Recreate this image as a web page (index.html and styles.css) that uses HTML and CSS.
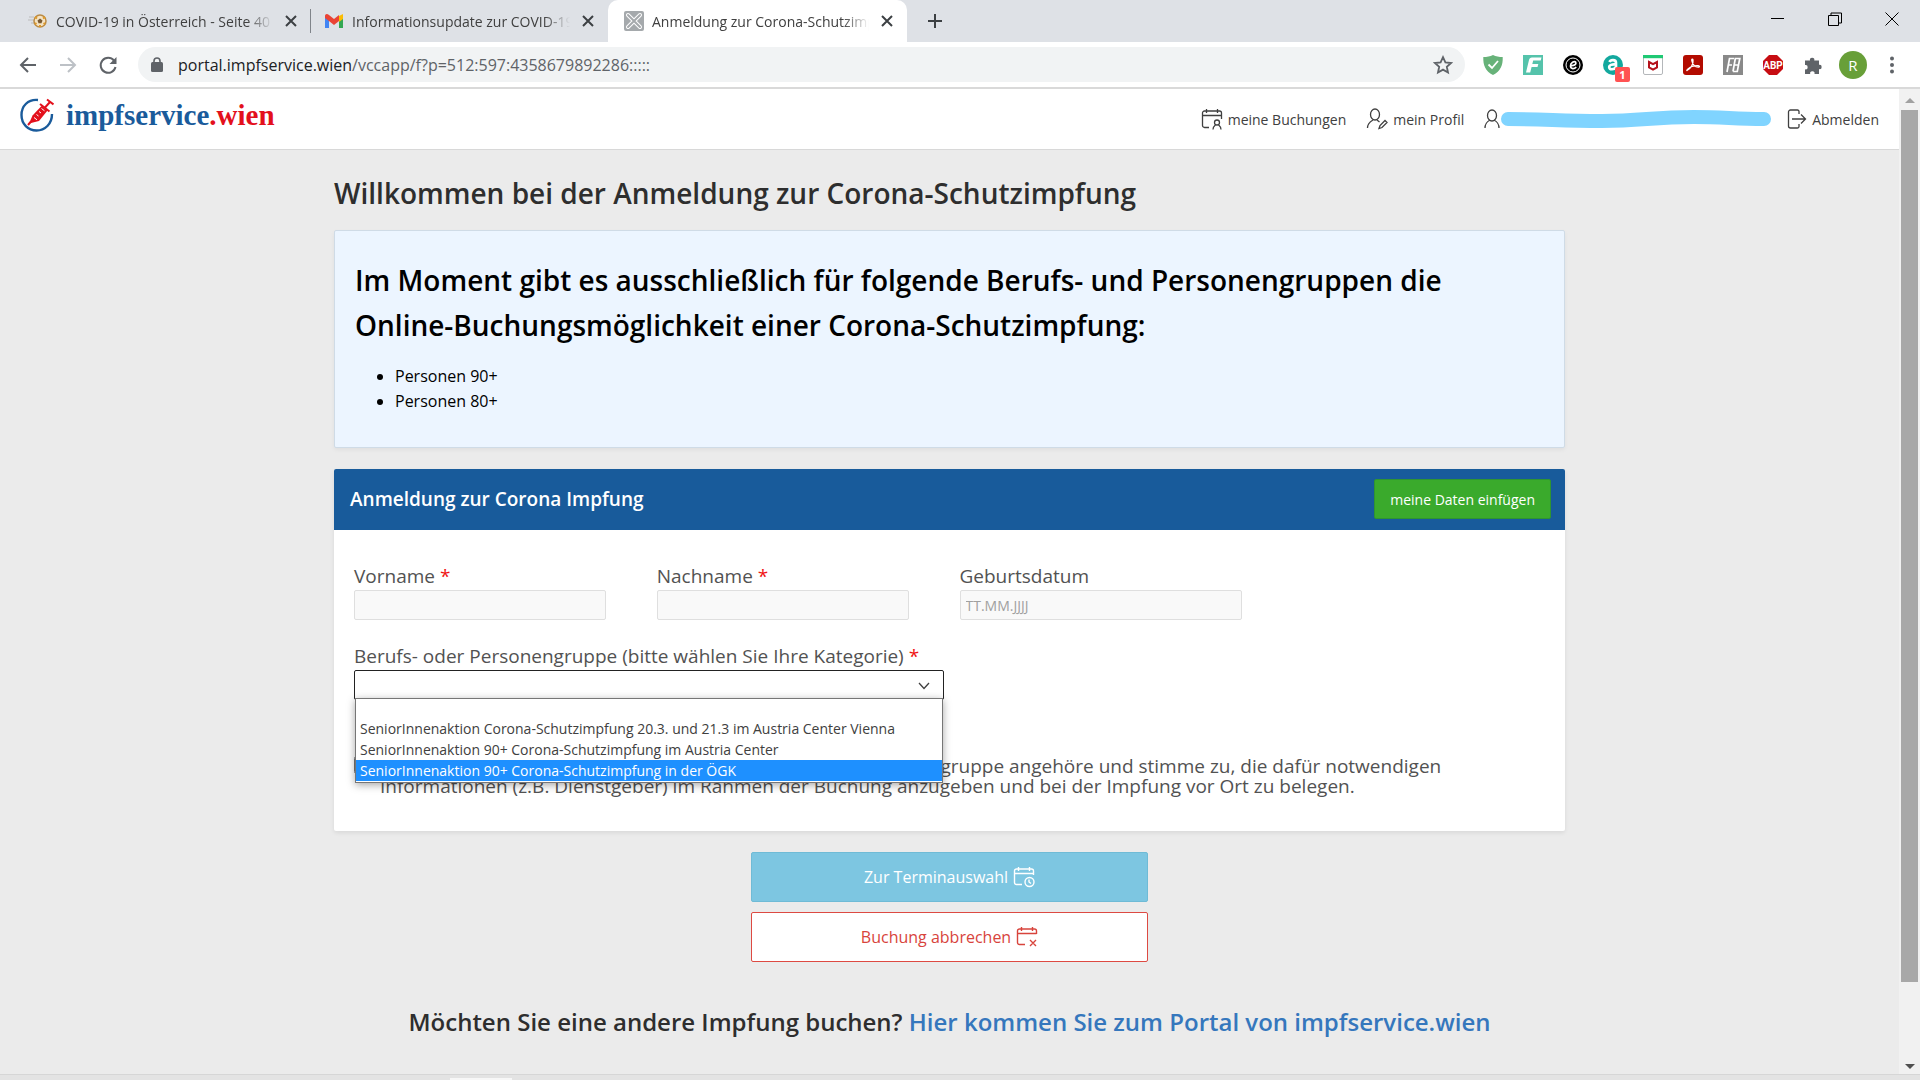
FILE: index.html
```html
<!DOCTYPE html>
<html lang="de">
<head>
    <meta charset="UTF-8">
    <meta name="viewport" content="width=device-width, initial-scale=1.0">
    <title>Anmeldung zur Corona-Schutzimpfung</title>
    <link rel="stylesheet" href="styles.css">
</head>
<body>
    <!-- browser tabs -->
    <div class="tab-strip">
        <div class="tab tab-first">
            <svg class="favicon" viewBox="0 0 20 20"><path d="M0 9h6M1 6h5M3 12h3" stroke="#bbb" stroke-width="1"/><circle cx="12" cy="10" r="6" fill="#f4e3c4" stroke="#b98a45" stroke-width="1.5"/><path d="M12 7.500l2.500 2-1 2.800h-3l-1-2.800z" fill="#7a5a32"/><path d="M7 6l2 1.500M17 6l-2 1.500M12 16v-2M7 13l1.500-1M17 13l-1.500-1" stroke="#e09a28" stroke-width="2"/></svg>
            <span class="tab-title">COVID-19 in Österreich - Seite 40</span>
            <button type="button" class="tab-close" aria-label="Tab schließen"><svg viewBox="0 0 12 12"><path d="M1 1l10 10M11 1L1 11"/></svg></button>
        </div>
        <div class="tab tab-second">
            <svg class="favicon" viewBox="0 0 20 20"><path d="M1 5v12h4V8z" fill="#4285f4"/><path d="M19 5v12h-4V8z" fill="#34a853"/><path d="M15 5l4-2v5l-4 3z" fill="#fbbc04"/><path d="M1 5c0-2 2-3 4-1l5 4 5-4v6l-5 4-5-4-4-3z" fill="#ea4335"/></svg>
            <span class="tab-title">Informationsupdate zur COVID-19</span>
            <button type="button" class="tab-close" aria-label="Tab schließen"><svg viewBox="0 0 12 12"><path d="M1 1l10 10M11 1L1 11"/></svg></button>
        </div>
        <div class="tab tab-active">
            <svg class="favicon" viewBox="0 0 20 20"><rect width="20" height="20" rx="2" fill="#a5a9ac"/><path d="M4 4l12 12M16 4L4 16" stroke="#fff" stroke-width="4" stroke-linecap="round"/><path d="M4 4l12 12M16 4L4 16" stroke="#a5a9ac" stroke-width="2" stroke-linecap="round"/></svg>
            <span class="tab-title">Anmeldung zur Corona-Schutzimpfung</span>
            <button type="button" class="tab-close" aria-label="Tab schließen"><svg viewBox="0 0 12 12"><path d="M1 1l10 10M11 1L1 11"/></svg></button>
        </div>
        <button type="button" class="new-tab" aria-label="Neuer Tab"><svg viewBox="0 0 16 16"><path d="M8 1v14M1 8h14"/></svg></button>
        <div class="window-buttons">
            <button type="button" aria-label="Minimieren"><svg viewBox="0 0 14 14"><path d="M0 6.500h13"/></svg></button>
            <button type="button" aria-label="Verkleinern"><svg viewBox="0 0 14 14"><path d="M.5 3.500h10v10H.5zM3 3V1h10.500v10H11"/></svg></button>
            <button type="button" aria-label="Schließen"><svg viewBox="0 0 14 14"><path d="M.5.5l13 13M13.500.5l-13 13"/></svg></button>
        </div>
    </div>

    <!-- address bar -->
    <div class="toolbar">
        <button type="button" aria-label="Zurück"><svg class="nav-icon" viewBox="0 0 20 20"><path d="M18 10H3M10 3l-7 7 7 7"/></svg></button>
        <button type="button" aria-label="Vorwärts"><svg class="nav-icon nav-off" viewBox="0 0 20 20"><path d="M2 10h15M10 3l7 7-7 7"/></svg></button>
        <button type="button" aria-label="Neu laden"><svg class="nav-icon" viewBox="0 0 20 20"><path d="M16 5.500A7.500 7.500 0 1 0 17.500 12"/><path d="M18.500 2v7h-7z" class="solid"/></svg></button>
        <div class="address">
            <svg class="lock" viewBox="0 0 12 16"><rect y="5" width="12" height="10" rx="1.500" fill="#5f6368"/><path d="M3 6V4a3 3 0 0 1 6 0v2" fill="none" stroke="#5f6368" stroke-width="1.600"/></svg>
            <span class="url"><b>portal.impfservice.wien</b>/vccapp/f?p=512:597:4358679892286:::::</span>
            <svg class="star" viewBox="0 0 20 20"><path d="M10 2.200l2.400 5.200 5.600.6-4.200 3.800 1.200 5.700-5-2.900-5 2.900 1.200-5.700L2 8l5.600-.6z" fill="none" stroke="#5f6368" stroke-width="1.800"/></svg>
        </div>
        <div class="extensions">
            <svg viewBox="0 0 20 20"><path d="M10 0c3 1.500 6 2 9.700 2 .3 8-2 14-9.700 18C2.300 16 0 10 .3 2 4 2 7 1.500 10 0z" fill="#67b279"/><path d="M5.500 9.500l3.500 3.500 6-7" fill="none" stroke="#fff" stroke-width="1.800"/></svg>
            <svg viewBox="0 0 20 20"><rect width="20" height="20" fill="#55c3ab"/><path d="M3 17.500L6 5c.4-1.500 1.200-2.500 3-2.500h9.500l-.8 3h-7.500l-.9 3.500h6l-.8 3H8.600l-1.400 5.500z" fill="#fff"/></svg>
            <svg viewBox="0 0 20 20"><circle cx="10" cy="10" r="10" fill="#000"/><circle cx="10" cy="10" r="7" fill="none" stroke="#fff" stroke-width="1"/><path d="M7.500 10.500c4 .5 6-1.500 5.200-3.200C11.500 5.500 7.300 7.500 7.500 11c.2 3.500 4 3 5.700 1" fill="none" stroke="#fff" stroke-width="1.700"/></svg>
            <span class="ext-badged">
                <svg viewBox="0 0 20 20"><circle cx="10" cy="10" r="10" fill="#13a89e"/><path d="M6.500 7c1-2.500 6.500-2.700 6.500.8V15M13 9.500c-4-.5-7 .5-6.800 2.800.3 2.800 5.300 2.500 6.800-.6" fill="none" stroke="#fff" stroke-width="2.600"/></svg>
                <span class="ext-count">1</span>
            </span>
            <svg viewBox="0 0 20 20"><rect x=".5" y=".5" width="19" height="19" rx="1.500" fill="#fff" stroke="#b4b7ba"/><path d="M0 0h20v3.200H0z" fill="#1fc974"/><path d="M6 7l4 2.200L14 7v5.500l-4 2.200-4-2.200z" fill="none" stroke="#b5121b" stroke-width="2"/></svg>
            <svg viewBox="0 0 20 20"><rect width="20" height="20" rx="3" fill="#b30b00"/><path d="M4 15.500c4-2 6.500-6.500 6-10.500-.2-1.500-1.600-1-1.200.6.700 3 3 6.400 6.400 6.600 1.700 0 1.600-1.500 0-1.600-3.500-.2-7.700 1-10.200 3.300-1 1-1.500 1.600-1 1.600z" fill="none" stroke="#fff" stroke-width="1.300"/></svg>
            <svg viewBox="0 0 20 20"><rect width="20" height="20" fill="#898989"/><path d="M4 17L6.500 3.500H11M5 10h4M10 16.500l2.300-13h4.500L15.500 10h-4.300M15.500 10l-1.200 6.500H10" fill="none" stroke="#fff" stroke-width="1.700"/></svg>
            <svg viewBox="0 0 20 20"><path d="M6 0h8l6 6v8l-6 6H6l-6-6V6z" fill="#c70d12"/><text x="10" y="13.500" text-anchor="middle" class="abp">ABP</text></svg>
            <svg viewBox="0 0 20 20"><path d="M2 5.500h5a2.200 2.200 0 1 1 4.300 0H16v4.300a2.200 2.200 0 1 1 0 4.300V19h-4.500a2.200 2.200 0 1 0-4.300 0H2v-4.700a2.200 2.200 0 1 0 0-4.300z" fill="#5f6368"/></svg>
        </div>
        <button type="button" class="avatar">R</button>
        <button type="button" class="kebab" aria-label="Menü"><svg viewBox="0 0 4 18"><circle cx="2" cy="2.500" r="2"/><circle cx="2" cy="9" r="2"/><circle cx="2" cy="15.500" r="2"/></svg></button>
    </div>

    <div class="viewport">
        <div class="page">
            <header class="page-header">
                <a href="#" class="logo">
                    <svg viewBox="0 0 34 34"><path d="M18 2C8 1 1.500 8 1.500 17S8 32.500 16.500 32.500 32 26 32 16" fill="none" stroke="#1a5b9b" stroke-width="2.400"/><path d="M9 25.500l3.500-8L21.500 8l6 4.500-8.500 10.500z" fill="#e3101c"/><path d="M8 27l3-3.500M20 6l9.500 7.500M25 9.500l5-5.500M27 1.500l6.500 5" stroke="#e3101c" stroke-width="2"/><path d="M14 19.500l3 2.300M16.500 16.500l2 1.500M19 13.500l2 1.500M21.500 10.500l3 2.300" stroke="#fff" stroke-width="1"/></svg>
                    <span class="logo-text">impfservice<span>.wien</span></span>
                </a>
                <nav class="user-nav">
                    <a href="#"><svg viewBox="0 0 22 22"><path d="M8 19.500H3.500a2 2 0 0 1-2-2V5a2 2 0 0 1 2-2h15a2 2 0 0 1 2 2v6M1.500 7.500h19M5.500 1v4M16.500 1v4"/><circle cx="16" cy="14.500" r="2.500"/><path d="M12 21.500c0-3 1.500-3.500 2.500-4.500M20 21.500c0-3-1.500-3.500-2.500-4.500"/></svg>meine Buchungen</a>
                    <a href="#"><svg viewBox="0 0 22 22"><ellipse cx="9" cy="6.500" rx="4.500" ry="5.500"/><path d="M1.500 20c0-5 3-6.500 5.500-8M11 12l2.500 2M13 20.500l1-3 5-5 2 2-5 5z"/></svg>mein Profil</a>
                    <a href="#" class="account" aria-label="Benutzerkonto">
                        <svg viewBox="0 0 16 22"><ellipse cx="8" cy="7.500" rx="4.500" ry="5.500"/><path d="M1 20c0-5 2.500-6.500 5-8M15 20c0-5-2.500-6.500-5-8"/></svg>
                        <svg class="blot" viewBox="0 0 272 20"><path d="M8 10c40 0 50 2 94 2 40 0 50-4 92-4 30 0 40 2 70 2"/></svg>
                    </a>
                    <a href="#"><svg viewBox="0 0 20 22"><path d="M12 6V3.500a1.500 1.500 0 0 0-1.500-1.500h-7A2 2 0 0 0 1.500 4v14a2 2 0 0 0 2 2h7a1.500 1.500 0 0 0 1.500-1.500V16M5 11h13M14 6.500l4.500 4.500-4.500 4.500"/></svg>Abmelden</a>
                </nav>
            </header>

            <main class="content">
                <h1>Willkommen bei der Anmeldung zur Corona-Schutzimpfung</h1>

                <section class="notice">
                    <h2>Im Moment gibt es ausschließlich für folgende Berufs- und Personengruppen die Online-Buchungsmöglichkeit einer Corona-Schutzimpfung:</h2>
                    <ul>
                        <li>Personen 90+</li>
                        <li>Personen 80+</li>
                    </ul>
                </section>

                <form class="booking">
                    <section class="panel">
                        <div class="panel-head">
                            <h2>Anmeldung zur Corona Impfung</h2>
                            <button type="button" class="btn-fill">meine Daten einfügen</button>
                        </div>
                        <div class="panel-body">
                            <div class="field">
                                <label for="vorname">Vorname <span class="req">*</span></label>
                                <input type="text" id="vorname">
                            </div>
                            <div class="field">
                                <label for="nachname">Nachname <span class="req">*</span></label>
                                <input type="text" id="nachname">
                            </div>
                            <div class="field field-date">
                                <label for="geburtsdatum">Geburtsdatum</label>
                                <input type="text" id="geburtsdatum" placeholder="TT.MM.JJJJ">
                            </div>
                            <div class="field field-group">
                                <label for="gruppe">Berufs- oder Personengruppe (bitte wählen Sie Ihre Kategorie) <span class="req">*</span></label>
                                <div class="select-wrap">
                                    <select id="gruppe">
                                        <option></option>
                                    </select>
                                    <svg class="chevron" viewBox="0 0 12 8"><path d="M1 1l5 5.500L11 1"/></svg>
                                    <ul class="options">
                                        <li></li>
                                        <li>SeniorInnenaktion Corona-Schutzimpfung 20.3. und 21.3 im Austria Center Vienna</li>
                                        <li>SeniorInnenaktion 90+ Corona-Schutzimpfung im Austria Center</li>
                                        <li class="selected">SeniorInnenaktion 90+ Corona-Schutzimpfung in der ÖGK</li>
                                    </ul>
                                </div>
                            </div>
                            <div class="consent">
                                <input type="checkbox" id="consent">
                                <label for="consent">Ich bestätige, dass ich der ausgewählten Berufs- oder Personengruppe angehöre und stimme zu, die dafür notwendigen<br>Informationen (z.B. Dienstgeber) im Rahmen der Buchung anzugeben und bei der Impfung vor Ort zu belegen.</label>
                            </div>
                        </div>
                    </section>

                    <div class="actions">
                        <button type="submit" class="btn btn-next" disabled>Zur Terminauswahl
                            <svg viewBox="0 0 22 22"><path d="M9 18.500H3.500a2 2 0 0 1-2-2V5a2 2 0 0 1 2-2h15a2 2 0 0 1 2 2v4M1.500 7.500h19M5.500 1v4M16.500 1v4"/><circle cx="16.500" cy="16" r="4.500"/><path d="M16 13.500V16l2 1.500"/></svg>
                        </button>
                        <button type="button" class="btn btn-cancel">Buchung abbrechen
                            <svg viewBox="0 0 22 22"><path d="M9 18.500H3.500a2 2 0 0 1-2-2V5a2 2 0 0 1 2-2h15a2 2 0 0 1 2 2v3M1.500 7.500h19M5.500 1v4M16.500 1v4M14 14l6 6M20 14l-6 6"/></svg>
                        </button>
                    </div>
                </form>

                <p class="other">Möchten Sie eine andere Impfung buchen? <a href="#">Hier kommen Sie zum Portal von impfservice.wien</a></p>
            </main>
        </div>
        <div class="scrollbar">
            <svg viewBox="0 0 10 6"><path d="M0 5l5-5 5 5z" fill="#a0a0a0"/></svg>
            <div class="thumb"></div>
            <svg viewBox="0 0 10 6"><path d="M0 0l5 5 5-5z" fill="#505050"/></svg>
        </div>
    </div>
    <div class="taskbar"><span></span></div>
</body>
</html>
```

FILE: styles.css
```css
* {
    box-sizing: border-box;
}
body {
    font-family: "Segoe UI", "Open Sans", sans-serif;
    font-size: 16px;
    color: #404040;
    margin: 0;
    height: 100vh;
    display: flex;
    flex-direction: column;
    overflow: hidden;
}
button {
    font-family: inherit;
    border: none;
    background: none;
    padding: 0;
    cursor: pointer;
}
svg {
    display: block;
    flex: none;
}
a {
    color: inherit;
    text-decoration: none;
}

/* tabs */
.tab-strip {
    display: flex;
    align-items: stretch;
    height: 42px;
    background-color: #dee1e6;
}
.tab {
    display: flex;
    align-items: center;
    width: 299px;
    padding: 0 12px 0 16px;
}
.tab-first {
    width: 311px;
    padding-left: 28px;
    background: linear-gradient(#80848a, #80848a) right / 1px 24px no-repeat;
}
.tab-second {
    width: 297px;
    padding-left: 13px;
}
.tab-active {
    background-color: #fff;
    border-radius: 10px 10px 0 0;
}
.favicon {
    width: 20px;
    height: 20px;
    margin-right: 8px;
}
.tab-title {
    flex: 1;
    overflow: hidden;
    white-space: nowrap;
    font-size: 14px;
    -webkit-mask-image: linear-gradient(to right, #000 88%, transparent);
    mask-image: linear-gradient(to right, #000 88%, transparent);
}
.tab-close {
    width: 14px;
    margin-left: 12px;
}
.tab-close svg {
    width: 12px;
    height: 12px;
    stroke: #3c4043;
    stroke-width: 2;
}
.new-tab {
    width: 56px;
}
.new-tab svg {
    width: 16px;
    height: 16px;
    margin: 0 auto;
    stroke: #3c4043;
    stroke-width: 2;
}
.window-buttons {
    display: flex;
    margin-left: auto;
}
.window-buttons button {
    width: 57px;
    padding-bottom: 5px;
}
.window-buttons svg {
    width: 14px;
    height: 14px;
    margin: 0 auto;
    fill: none;
    stroke: #000;
}

/* toolbar */
.toolbar {
    display: flex;
    align-items: center;
    height: 47px;
    padding: 0 18px;
    border-bottom: 2px solid #d9d9d9;
    background-color: #fff;
}
.nav-icon {
    width: 20px;
    height: 20px;
    margin-right: 20px;
    fill: none;
    stroke: #5f6368;
    stroke-width: 2;
}
.nav-off {
    stroke: #bdc1c6;
}
.nav-icon .solid {
    fill: #5f6368;
    stroke: none;
}
.address {
    flex: 1;
    display: flex;
    align-items: center;
    height: 35px;
    padding: 0 12px 0 13px;
    border-radius: 18px;
    background-color: #f1f3f4;
}
.lock {
    width: 12px;
    height: 16px;
}
.url {
    flex: 1;
    margin-left: 15px;
    font-size: 16px;
    color: #5f6368;
}
.url b {
    font-weight: normal;
    color: #202124;
}
.star {
    width: 20px;
    height: 20px;
}
.extensions {
    display: flex;
    gap: 20px;
    margin: 0 16px 0 18px;
}
.extensions svg {
    width: 20px;
    height: 20px;
}
.ext-badged {
    position: relative;
}
.ext-count {
    position: absolute;
    left: 12px;
    top: 12px;
    width: 15px;
    height: 15px;
    border-radius: 2px;
    background-color: #ff5252;
    color: #fff;
    font-size: 11px;
    font-weight: bold;
    line-height: 15px;
    text-align: center;
}
.abp {
    font-family: Roboto, sans-serif;
    font-size: 10px;
    font-weight: bold;
    fill: #fff;
}
.avatar {
    width: 28px;
    height: 28px;
    border-radius: 50%;
    background-color: #689f38;
    color: #fff;
    font-size: 15px;
}
.kebab {
    width: 4px;
    margin: 0 8px 0 23px;
}
.kebab svg {
    width: 4px;
    height: 18px;
    fill: #5f6368;
}

/* page */
.viewport {
    flex: 1;
    display: flex;
    min-height: 0;
}
.page {
    flex: 1;
    overflow: hidden;
    background-color: #ebebeb;
}
.scrollbar {
    width: 21px;
    display: flex;
    flex-direction: column;
    align-items: center;
    padding: 9px 2px 4px;
    background-color: #f1f1f1;
}
.scrollbar svg {
    width: 10px;
    height: 6px;
}
.thumb {
    width: 17px;
    height: calc(100% - 100px);
    margin: 6px 0 auto;
    background-color: #a8a8a8;
}
.taskbar {
    height: 6px;
    padding: 3px 0 0 450px;
    border-top: 1px solid #d6d6d6;
    background-color: #e3e3e3;
}
.taskbar span {
    display: block;
    width: 62px;
    height: 2px;
    background-color: #f7f7f7;
}
.page-header {
    display: flex;
    align-items: center;
    justify-content: space-between;
    height: 61px;
    padding: 0 20px;
    border-bottom: 1px solid #d8d8d8;
    background-color: #fff;
}
.logo {
    display: flex;
    align-items: center;
    gap: 12px;
    padding-bottom: 8px;
}
.logo svg {
    width: 34px;
    height: 34px;
}
.logo-text {
    font-family: "Liberation Serif", serif;
    font-size: 29px;
    font-weight: bold;
    color: #1a5b9b;
}
.logo-text span {
    color: #e3101c;
}
.user-nav {
    display: flex;
    gap: 20px;
}
.user-nav a {
    display: flex;
    align-items: center;
    gap: 5px;
    font-size: 14px;
}
.user-nav svg {
    height: 22px;
    fill: none;
    stroke: #404040;
    stroke-width: 1.3;
}
.user-nav .account {
    gap: 0;
    margin-right: -5px;
}
.user-nav .blot {
    width: 272px;
    height: 20px;
    stroke: #80d4ff;
    stroke-width: 14;
    stroke-linecap: round;
}

.content {
    max-width: 1279px;
    margin: 0 auto;
    padding: 23px 24px;
}
h1, h2 {
    margin: 0;
    font-size: 28px;
    font-weight: 600;
}
h1 {
    line-height: 40px;
    color: #2e2e2e;
}
.notice {
    margin-top: 17px;
    padding: 27px 20px 33px;
    border: 1px solid #cfdbe6;
    border-radius: 2px;
    background-color: #ecf5ff;
    box-shadow: 0 2px 4px rgba(0, 0, 0, 0.05);
    color: #000;
}
.notice h2 {
    line-height: 45px;
}
.notice ul {
    margin: 16px 0 0;
    padding-left: 40px;
    line-height: 25px;
}
.panel {
    margin-top: 21px;
    border-radius: 2px;
    background-color: #fff;
    box-shadow: 0 2px 4px rgba(0, 0, 0, 0.08);
}
.panel-head {
    display: flex;
    align-items: center;
    justify-content: space-between;
    padding: 10px 14px 11px 16px;
    border-radius: 2px 2px 0 0;
    background-color: #185b9b;
}
.panel-head h2 {
    font-size: 19px;
    color: #fff;
}
.btn-fill {
    height: 40px;
    padding: 0 15px;
    border: 1px solid #2f9431;
    border-radius: 2px;
    background-color: #3aaa2c;
    color: #fff;
    font-size: 14px;
}
.panel-body {
    display: grid;
    grid-template-columns: repeat(4, 1fr);
    row-gap: 22px;
    padding: 32px 10px;
}
.field {
    padding: 0 41px 0 10px;
}
.field-date {
    padding-right: 10px;
}
.field-group {
    grid-column: span 2;
    padding-right: 6px;
}
.field label {
    display: block;
    line-height: 28px;
    font-size: 19px;
    white-space: nowrap;
    color: #525252;
}
.req {
    color: #f01414;
}
.field input {
    display: block;
    width: 100%;
    height: 30px;
    padding: 0 5px;
    border: 1px solid #dfdfdf;
    border-radius: 2px;
    background-color: #f9f9f9;
    font-family: inherit;
    font-size: 14px;
}
.field input::placeholder {
    color: #a0a0a0;
}
.select-wrap {
    position: relative;
}
.field select {
    display: block;
    width: 100%;
    height: 30px;
    appearance: none;
    border: 1px solid #222;
    border-radius: 2px;
    background-color: #fff;
}
.chevron {
    position: absolute;
    right: 14px;
    top: 12px;
    width: 12px;
    height: 8px;
    fill: none;
    stroke: #404040;
    stroke-width: 1.3;
}
.options {
    position: absolute;
    top: 28px;
    left: 1px;
    right: 1px;
    margin: 0;
    padding: 0 0 1px;
    border: 1px solid #767676;
    background-color: #fff;
    box-shadow: 0 2px 8px rgba(0, 0, 0, 0.35);
    list-style: none;
    font-size: 14px;
}
.options li {
    height: 21px;
    padding-left: 4px;
    line-height: 21px;
    white-space: nowrap;
}
.options li:empty {
    height: 19px;
}
.options .selected {
    background-color: #1e90ff;
    color: #fff;
}
.consent {
    grid-column: span 4;
    display: flex;
    gap: 8px;
    margin-top: 32px;
    padding: 2px 10px 3px;
}
.consent input {
    width: 18px;
    height: 18px;
    margin: 0;
}
.consent label {
    font-size: 19px;
    line-height: 20px;
    color: #525252;
}
.actions {
    display: flex;
    flex-direction: column;
    align-items: center;
    gap: 10px;
    margin-top: 21px;
}
.btn {
    display: flex;
    align-items: center;
    justify-content: center;
    gap: 5px;
    width: 397px;
    height: 50px;
    border: 1px solid #6fbbd6;
    border-radius: 2px;
    background-color: #7dc6e1;
    color: #fff;
    font-size: 16px;
}
.btn svg {
    width: 22px;
    height: 22px;
    fill: none;
    stroke: currentColor;
    stroke-width: 1.4;
}
.btn-cancel {
    border-color: #dd4a42;
    background-color: #fff;
    color: #d8443c;
}
.other {
    margin: 42px 0 0;
    text-align: center;
    font-size: 24px;
    line-height: 36px;
    font-weight: 600;
    color: #2e2e2e;
}
.other a {
    color: #3577bd;
}
```
